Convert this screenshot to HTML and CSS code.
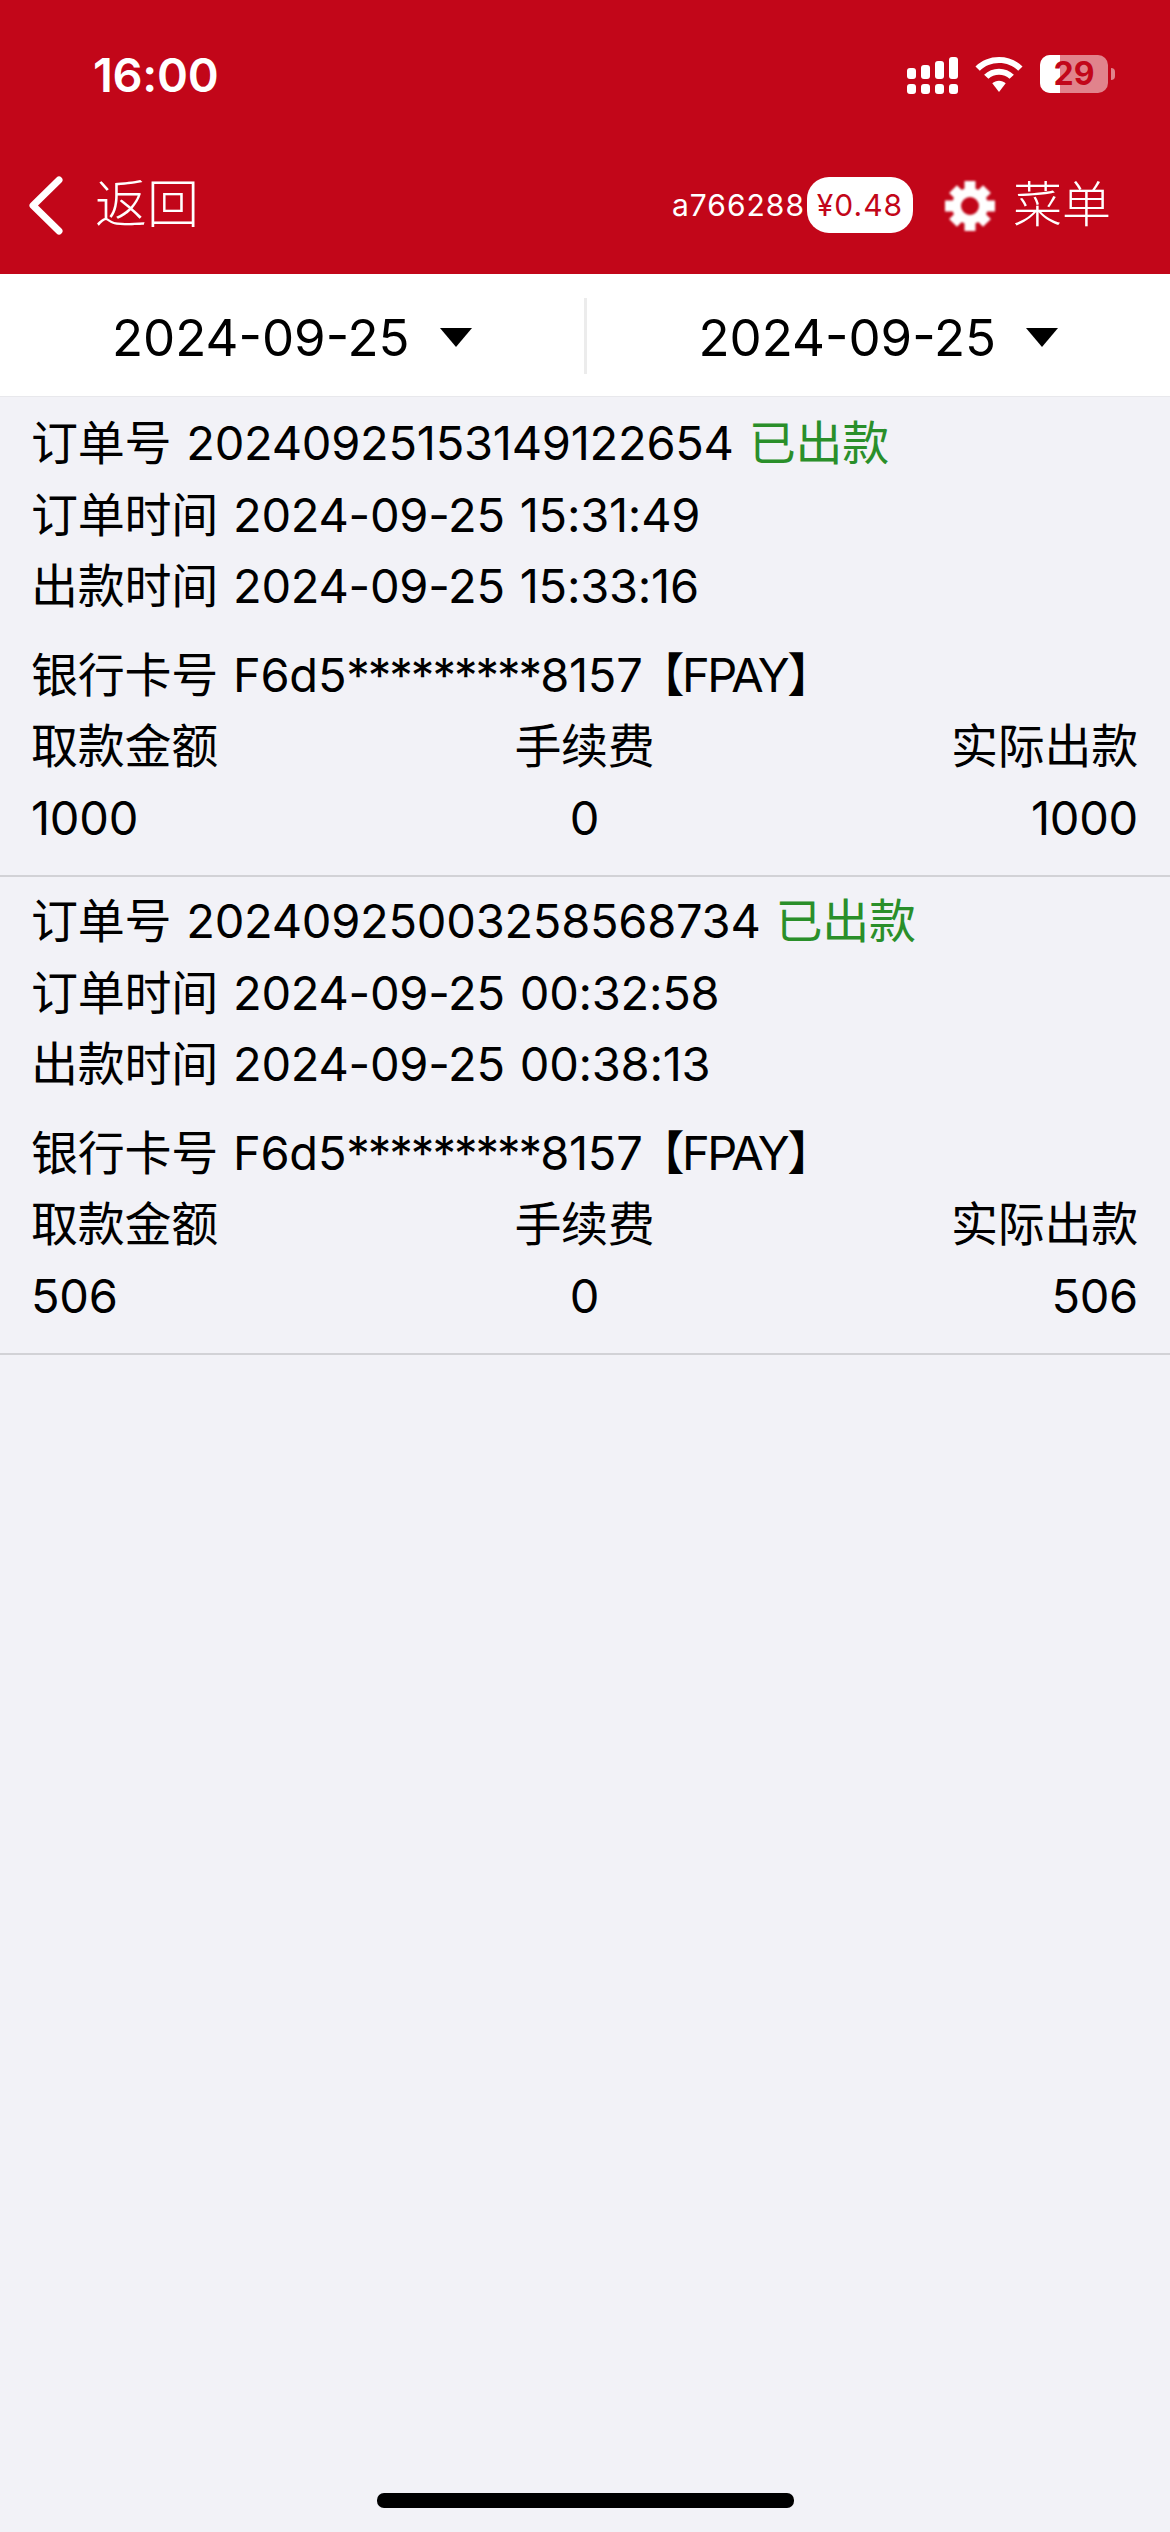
FILE: index.html
```html
<!DOCTYPE html>
<html lang="zh">
<head>
<meta charset="utf-8">
<title>出款记录</title>
<link rel="stylesheet" href="styles.css">
</head>
<body>
<header class="top">
  <div class="status">
    <span class="clock">16:00</span>
    <div class="status-icons">
      <svg class="signal" width="51" height="37" viewBox="0 0 51 37" fill="#fff">
        <rect x="0" y="11" width="9" height="11" rx="3"/><rect x="14" y="8" width="9" height="14" rx="3"/><rect x="28" y="4" width="9" height="18" rx="3"/><rect x="42" y="0" width="9" height="22" rx="3"/>
        <rect x="0" y="27" width="9" height="10" rx="3"/><rect x="14" y="27" width="9" height="10" rx="3"/><rect x="28" y="27" width="9" height="10" rx="3"/><rect x="42" y="27" width="9" height="10" rx="3"/>
      </svg>
      <svg class="wifi" width="48" height="35" viewBox="0 0 50 38.500" preserveAspectRatio="none" fill="#fff">
        <path d="M25 0C15.500 0 7 3.700 .5 10.500L5 15C10.300 9.500 17.300 6.500 25 6.500S39.700 9.500 45 15L49.500 10.500C43 3.700 34.500 0 25 0Z"/>
        <path d="M25 13C19 13 13.700 15.300 9.500 19.500L14 24C17 21.100 20.800 19.500 25 19.500S33 21.100 36 24L40.500 19.500C36.300 15.300 31 13 25 13Z"/>
        <path d="M25 26C22.300 26 20 27 18 28.800L25 38.500L32 28.800C30 27 27.700 26 25 26Z"/>
      </svg>
      <div class="battery">
        <div class="battery-body"><div class="battery-fill"></div><span class="battery-num">29</span></div>
        <div class="battery-cap"></div>
      </div>
    </div>
  </div>
  <nav class="nav">
    <div class="back">
      <svg width="34" height="59" viewBox="0 0 34 59" fill="none" stroke="#fff" stroke-width="7" stroke-linecap="round" stroke-linejoin="round"><path d="M30 4L4 29.500L30 55"/></svg>
      <span class="back-label">返回</span>
    </div>
    <div class="nav-right">
      <span class="user">a766288</span>
      <span class="balance">¥0.48</span>
      <svg class="gear" width="50" height="50" viewBox="-25 -25 50 50" fill="#fff">
        <circle r="13.500" fill="none" stroke="#fff" stroke-width="9"/>
        <rect x="-5.500" y="-25" width="11" height="10"/>
        <rect x="-5.500" y="-24" width="11" height="9" transform="rotate(45)"/>
        <rect x="-5.500" y="-25" width="11" height="10" transform="rotate(90)"/>
        <rect x="-5.500" y="-24" width="11" height="9" transform="rotate(135)"/>
        <rect x="-5.500" y="-25" width="11" height="10" transform="rotate(180)"/>
        <rect x="-5.500" y="-24" width="11" height="9" transform="rotate(225)"/>
        <rect x="-5.500" y="-25" width="11" height="10" transform="rotate(270)"/>
        <rect x="-5.500" y="-24" width="11" height="9" transform="rotate(315)"/>
      </svg>
      <span class="menu-label">菜单</span>
    </div>
  </nav>
</header>
<div class="dates">
  <div class="date"><span>2024-09-25</span><i class="caret"></i></div>
  <div class="date date-second"><span>2024-09-25</span><i class="caret"></i></div>
</div>
<main class="orders">
  <section class="order">
    <p>订单号 20240925153149122654 <span class="ok">已出款</span></p>
    <p>订单时间 2024-09-25 15:31:49</p>
    <p>出款时间 2024-09-25 15:33:16</p>
    <p class="card">银行卡号 F6d5<span class="mask">*********</span>8157<span class="tag">【FPAY】</span></p>
    <div class="cols"><span>取款金额</span><span>手续费</span><span>实际出款</span></div>
    <div class="cols"><span>1000</span><span>0</span><span>1000</span></div>
  </section>
  <section class="order">
    <p>订单号 20240925003258568734 <span class="ok">已出款</span></p>
    <p>订单时间 2024-09-25 00:32:58</p>
    <p>出款时间 2024-09-25 00:38:13</p>
    <p class="card">银行卡号 F6d5<span class="mask">*********</span>8157<span class="tag">【FPAY】</span></p>
    <div class="cols"><span>取款金额</span><span>手续费</span><span>实际出款</span></div>
    <div class="cols"><span>506</span><span>0</span><span>506</span></div>
  </section>
</main>
<div class="home-bar"></div>
</body>
</html>
```
FILE: styles.css
```css
* { box-sizing: border-box; }
html, body { margin: 0; padding: 0; }
body {
  width: 1170px;
  height: 2532px;
  position: relative;
  overflow: hidden;
  background: #f2f2f7;
  color: #000;
  font-family: Inter, "Noto Sans CJK SC", sans-serif;
}
.top { height: 274px; background: #c20619; color: #fff; padding-top: 46px; }
.status { height: 58px; padding: 0 0 0 93px; display: flex; align-items: center; justify-content: space-between; }
.clock { font-size: 47px; font-weight: 600; line-height: 58px; letter-spacing: -.3px; }
.status-icons { display: flex; align-items: center; padding-right: 55px; }
.signal { margin-right: 17px; }
.wifi { margin-right: 17px; margin-top: -2px; }
.battery { display: flex; align-items: center; margin-top: -2px; }
.battery-body { position: relative; width: 68px; height: 38px; border-radius: 10px; background: rgba(255,255,255,.5); }
.battery-fill { width: 20px; height: 38px; border-radius: 10px 0 0 10px; background: #fff; }
.battery-num { position: absolute; left: 0; right: 0; top: 0; text-align: center; font-size: 32px; font-weight: 700; line-height: 38px; color: #c20619; }
.battery-cap { width: 4px; height: 12px; margin-left: 3px; border-radius: 0 6px 6px 0; background: rgba(255,255,255,.5); }
.nav { height: 170px; display: flex; align-items: flex-start; justify-content: space-between; padding: 68px 59px 0 29px; }
.back { display: flex; align-items: center; height: 66px; }
.back-label { margin-left: 32px; font-size: 52px; line-height: 66px; font-weight: 300; }
.nav-right { display: flex; align-items: center; height: 66px; }
.user { font-size: 30px; line-height: 56px; letter-spacing: 1px; }
.balance { width: 106px; height: 56px; margin-left: 2px; border-radius: 22px; background: #fff; color: #c20619; font-size: 30px; line-height: 56px; letter-spacing: 1px; text-align: center; }
.gear { margin-left: 32px; margin-top: 2px; filter: blur(.8px); }
.menu-label { margin-left: 18px; font-size: 49px; line-height: 66px; font-weight: 300; }
.dates { height: 123px; padding-top: 2px; background: #fff; display: flex; align-items: center; border-bottom: 1px solid #e8e8ec; }
.date { flex: 1; height: 76px; padding-top: 2px; display: flex; align-items: center; justify-content: center; font-size: 51px; }
.date-second { border-left: 3px solid #ececec; }
.caret { width: 0; height: 0; margin-left: 30px; border-left: 16px solid transparent; border-right: 16px solid transparent; border-top: 19px solid #000; }
.orders { padding-top: 2px; }
.order { height: 478px; padding: 8px 32px 0 31px; border-bottom: 2px solid #d2d2d6; font-size: 47px; line-height: 71.500px; letter-spacing: -.25px; word-spacing: 2px; }
.order p { margin: 0; }
.order .card { margin-top: 17px; }
.ok { color: #2a8f2a; }
.mask { letter-spacing: -2px; }
.tag { margin-left: -5px; letter-spacing: -2.500px; }
.cols { display: grid; grid-template-columns: 1fr auto 1fr; }
.cols span:last-child { text-align: right; }
.home-bar { position: absolute; left: 377px; top: 2493px; width: 417px; height: 15px; border-radius: 7px; background: #000; }
```
